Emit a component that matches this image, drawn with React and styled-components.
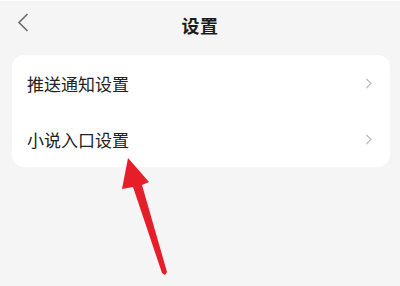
import styled, { createGlobalStyle } from 'styled-components'

const GlobalStyle = createGlobalStyle`
  html, body {
    margin: 0;
    padding: 0;
    background: #f5f5f5;
  }
  body {
    font-family: 'Noto Sans CJK SC', 'Noto Sans', sans-serif;
  }
`

const items = ['推送通知设置', '小说入口设置']

export default function App() {
  return (
    <Page>
      <GlobalStyle />
      <Header>
        <BackButton aria-label="返回">
          <svg width="12" height="19" viewBox="0 0 12 19">
            <path d="M10.5 1 L2 9.5 L10.5 18" fill="none" stroke="#6a6a6a" strokeWidth="1.6" />
          </svg>
        </BackButton>
        <Title>设置</Title>
      </Header>
      <Card>
        {items.map((label) => (
          <Row key={label}>
            <Label>{label}</Label>
            <svg width="8" height="11" viewBox="0 0 8 11">
              <path d="M1.5 1 L6 5.5 L1.5 10" fill="none" stroke="#bdbdbd" strokeWidth="1.4" />
            </svg>
          </Row>
        ))}
      </Card>
      <Arrow viewBox="0 0 400 286" width="400" height="286">
        <polygon
          points="128,157 149,181 142,184 167,271 165,274 162,272 133,186 122,188"
          fill="#e61e2a"
        />
      </Arrow>
    </Page>
  )
}

const Page = styled.div`
  position: relative;
  width: 400px;
  height: 286px;
  overflow: hidden;
  background: #f5f5f5;
  border-top: 1px solid #fbfbfb;
  box-sizing: border-box;
`

const Header = styled.header`
  position: relative;
  height: 47px;
  display: flex;
  align-items: center;
  justify-content: center;
`

const BackButton = styled.button`
  position: absolute;
  left: 17px;
  top: 12px;
  padding: 0;
  border: none;
  background: none;
  display: flex;
`

const Title = styled.h1`
  margin: 0;
  font-size: 18px;
  font-weight: 700;
  color: #1c1c1c;
  letter-spacing: 0.5px;
`

const Card = styled.section`
  margin: 7px 10px 0 12px;
  background: #ffffff;
  border-radius: 12px;
  display: flex;
  flex-direction: column;
`

const Row = styled.div`
  height: 56px;
  display: flex;
  align-items: center;
  justify-content: space-between;
  padding: 0 17px 0 15px;
`

const Label = styled.span`
  font-size: 17px;
  color: #222222;
`

const Arrow = styled.svg`
  position: absolute;
  left: 0;
  top: 0;
  pointer-events: none;
`
